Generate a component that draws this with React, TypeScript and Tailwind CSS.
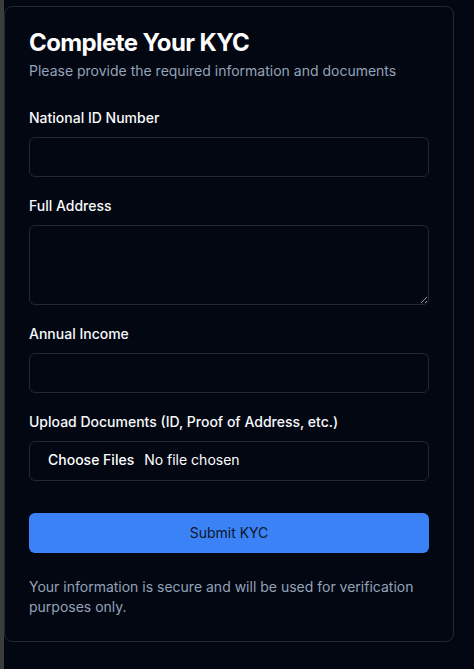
import React from 'react';

const inputClass =
  'block w-full h-10 rounded-md border border-[#1f2937] bg-transparent px-3 py-2 text-sm text-white outline-none';

const Field = ({ label, children }: { label: string; children: React.ReactNode }) => (
  <div>
    <label className="block text-sm font-medium leading-5 text-[#f8fafc] mb-[9px]">{label}</label>
    {children}
  </div>
);

export default function App() {
  return (
    <div
      className="min-h-screen flex bg-[#030712]"
      style={{ fontFamily: 'Inter, "Noto Sans", sans-serif' }}
    >
      {/* left edge strip */}
      <div className="w-1 shrink-0 bg-[#3c3c3c]" />

      <div className="mt-[6px] mb-auto w-[450px] rounded-lg border border-[#1f2937] bg-[#030712] p-6">
        {/* Header */}
        <div className="space-y-1.5">
          <h1 className="text-2xl font-bold leading-none tracking-tight text-white">Complete Your KYC</h1>
          <p className="text-sm text-[#94a3b8]">Please provide the required information and documents</p>
        </div>

        {/* Form */}
        <form className="mt-[27px] flex flex-col gap-[19px]" onSubmit={(e) => e.preventDefault()}>
          <Field label="National ID Number">
            <input type="text" className={inputClass} />
          </Field>

          <Field label="Full Address">
            <textarea className="block w-full h-20 rounded-md border border-[#1f2937] bg-transparent px-3 py-2 text-sm text-white outline-none" />
          </Field>

          <Field label="Annual Income">
            <input type="number" className={inputClass} />
          </Field>

          <Field label="Upload Documents (ID, Proof of Address, etc.)">
            <input
              type="file"
              multiple
              className="block w-full h-10 rounded-md border border-[#1f2937] bg-transparent px-3 py-2 text-sm text-white outline-none file:mr-1 file:border-0 file:bg-transparent file:px-1.5 file:text-sm file:font-medium file:text-white"
            />
          </Field>

          <button
            type="submit"
            className="mt-[13px] h-10 w-full rounded-md bg-[#3b82f6] text-sm font-normal text-[#0f172a]"
          >
            Submit KYC
          </button>
        </form>

        <p className="mt-6 text-sm leading-5 text-[#94a3b8]">
          Your information is secure and will be used for verification purposes only.
        </p>
      </div>
    </div>
  );
}
